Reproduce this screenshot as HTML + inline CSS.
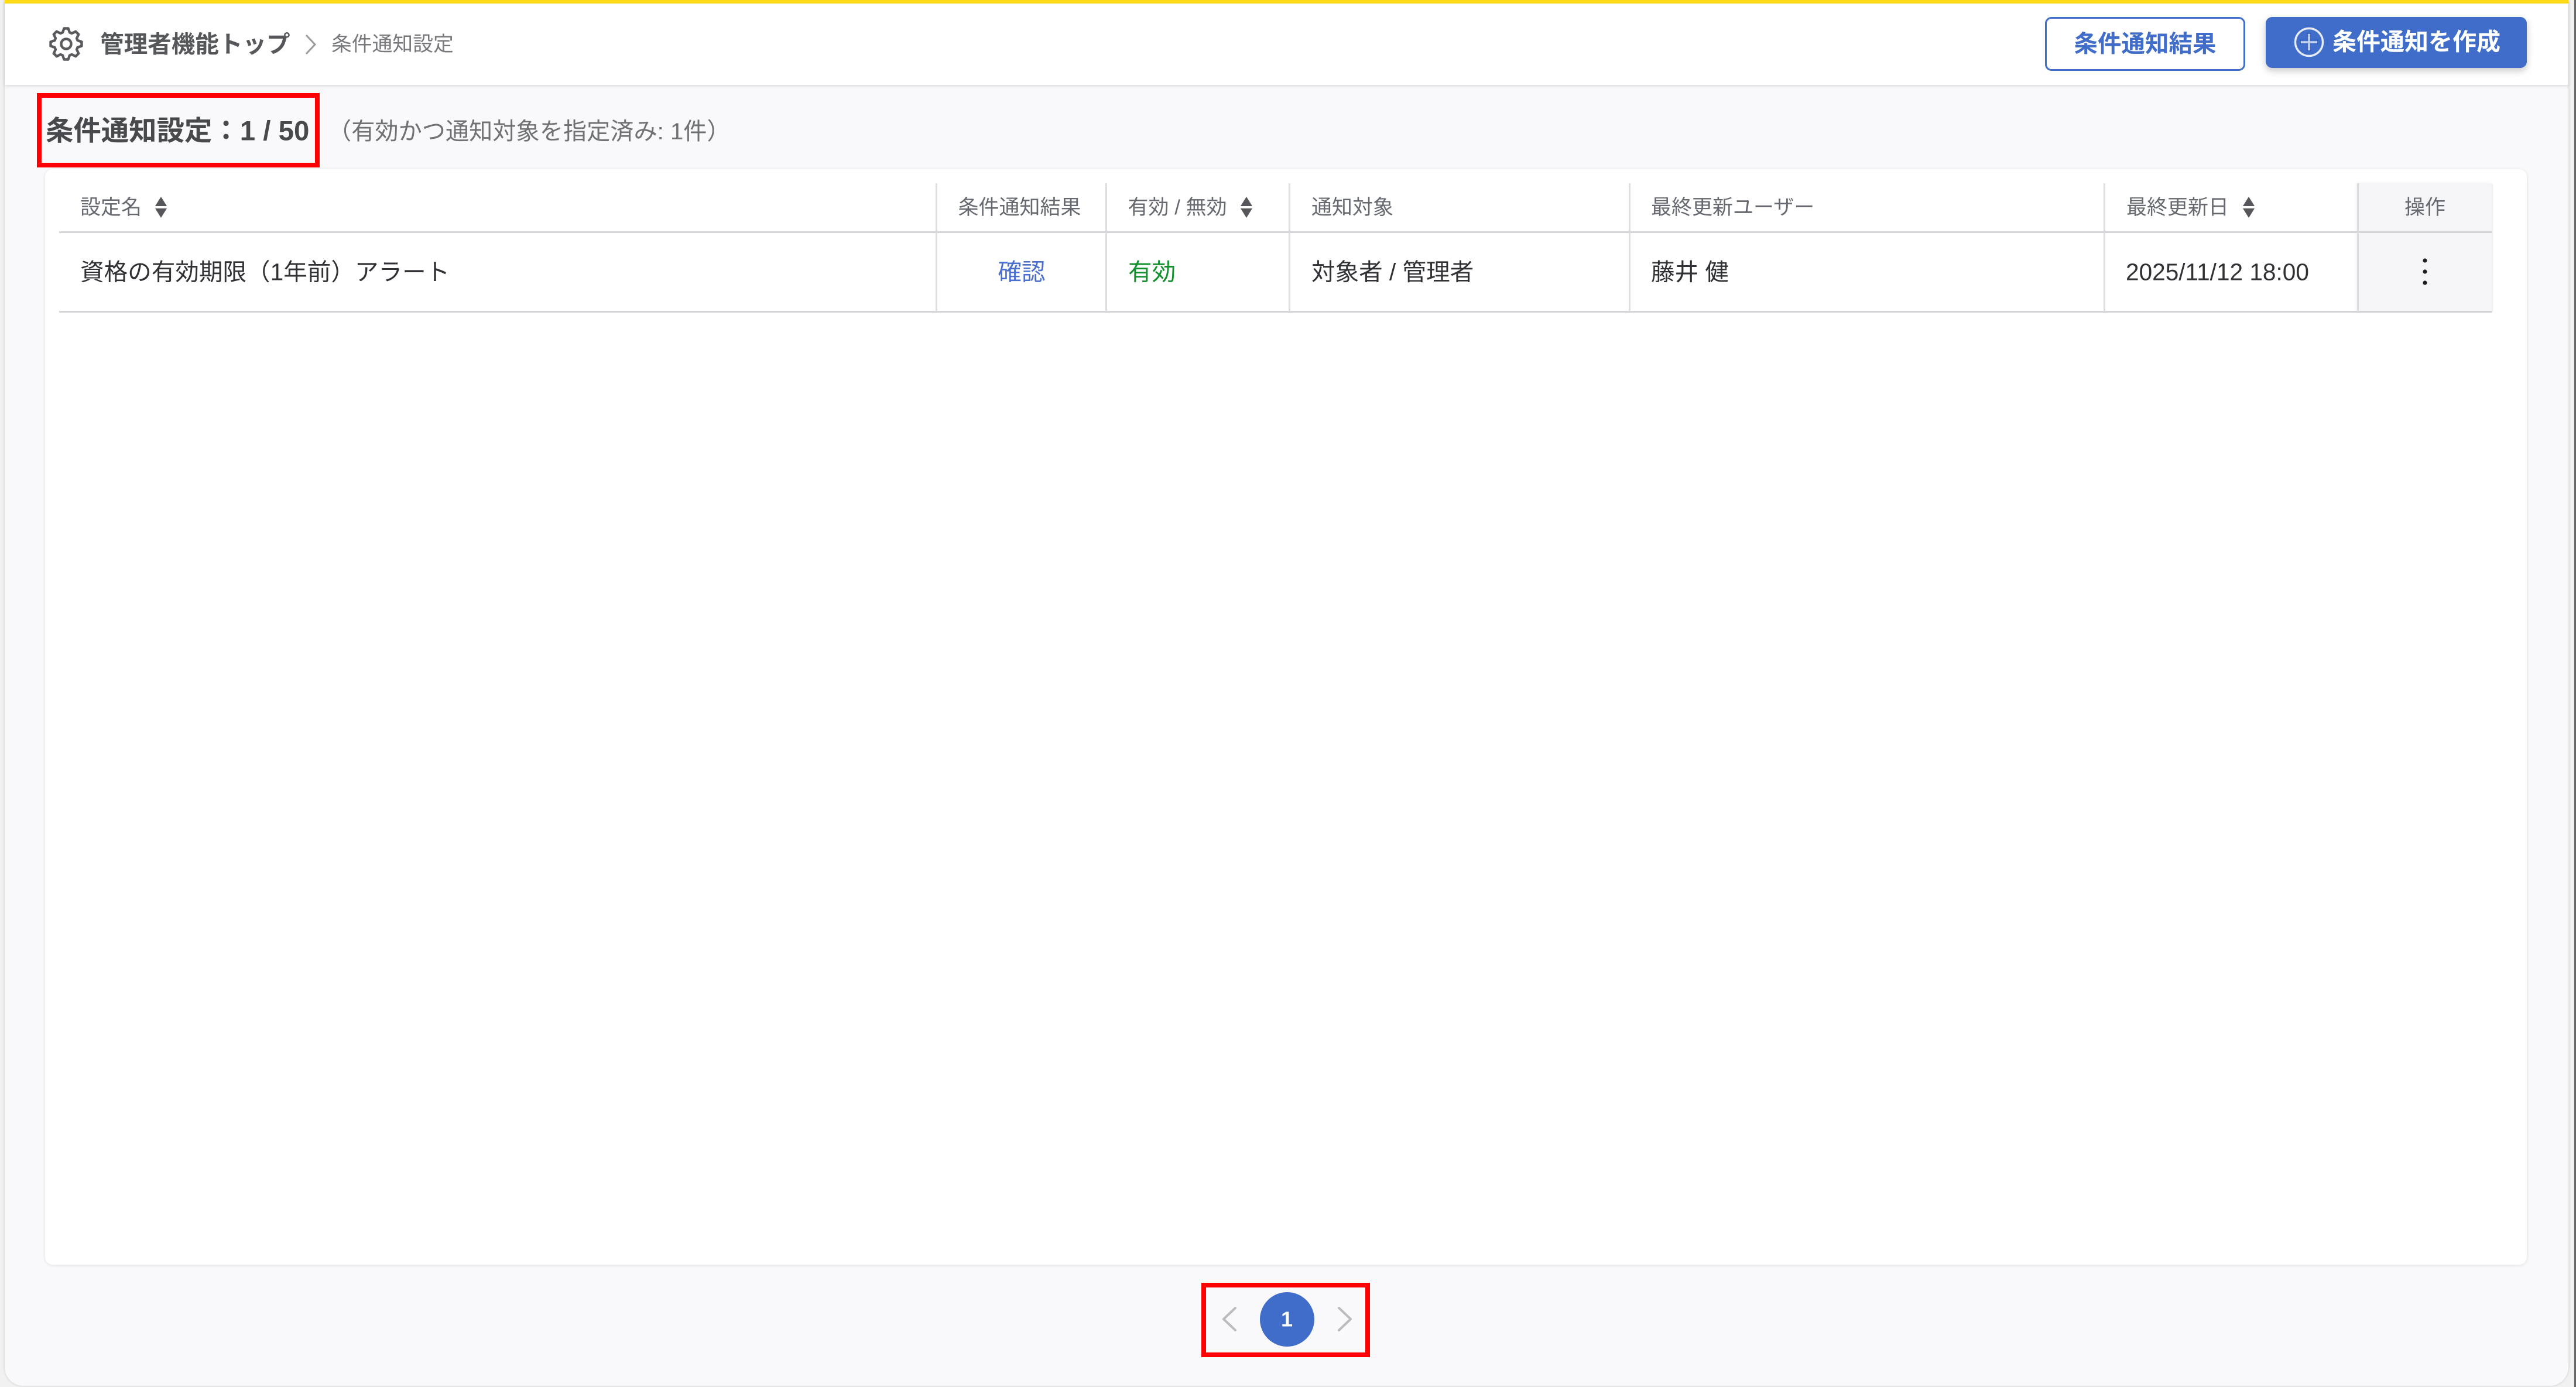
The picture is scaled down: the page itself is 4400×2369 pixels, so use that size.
<!DOCTYPE html>
<html lang="ja">
<head>
<meta charset="utf-8">
<title>条件通知設定</title>
<style>
html,body{margin:0;padding:0;width:4400px;height:2369px;overflow:hidden;background:#f1f1f1}
body{position:relative;font-family:"Liberation Sans","Noto Sans CJK JP",sans-serif}
.a{position:absolute;box-sizing:border-box}
.t{position:absolute;white-space:nowrap;transform:translateY(-50%);line-height:1.2}
.c{transform:translate(-50%,-50%)}
.h{font-size:35px;color:#666a70}
.r{font-size:40.6px;color:#2f3134}
.v{position:absolute;width:3px;background:#dcdde0}
.red{position:absolute;box-sizing:border-box;border:8px solid #f00}
</style>
</head>
<body>
<!-- outer panel -->
<div class="a" style="left:8px;top:0;width:4379px;height:2367px;background:#f9f9fb;border-radius:0 0 32px 32px;box-shadow:0 0 5px rgba(0,0,0,.16)"></div>
<div class="a" style="left:4397px;top:0;width:3px;height:2369px;background:#666"></div>

<!-- header -->
<div class="a" style="left:8px;top:0;width:4379px;height:145px;background:#fff;box-shadow:0 2px 6px rgba(0,0,0,.13)"></div>
<div class="a" style="left:8px;top:0;width:4379px;height:6px;background:#ffd814"></div>

<svg class="a" style="left:84px;top:46px" width="58" height="58" viewBox="-29 -29 58 58" fill="none" stroke="#5a5a5e" stroke-width="4.4" stroke-linejoin="round">
<path d="M-6 -19.5L-3.5 -26.5L3.5 -26.5L6 -19.5L9.55 -18.03L16.27 -21.21L21.21 -16.27L18.03 -9.55L19.5 -6L26.5 -3.5L26.5 3.5L19.5 6L18.03 9.55L21.21 16.27L16.27 21.21L9.55 18.03L6 19.5L3.5 26.5L-3.5 26.5L-6 19.5L-9.55 18.03L-16.27 21.21L-21.21 16.27L-18.03 9.55L-19.5 6L-26.5 3.5L-26.5 -3.5L-19.5 -6L-18.03 -9.55L-21.21 -16.27L-16.27 -21.21L-9.55 -18.03Z"/>
<circle cx="0" cy="0" r="8.5"/>
</svg>
<div class="t" style="left:171px;top:76px;font-size:40.6px;font-weight:700;color:#55575b">管理者機能トップ</div>
<svg class="a" style="left:518px;top:57px" width="26" height="38" viewBox="0 0 26 38" fill="none" stroke="#9a9a9e" stroke-width="3"><path d="M5 3L20 19L5 35"/></svg>
<div class="t" style="left:566px;top:76px;font-size:34.8px;color:#77797d">条件通知設定</div>

<!-- header buttons -->
<div class="a" style="left:3493px;top:29px;width:342px;height:92px;background:#fff;border:3.5px solid #3f6dc9;border-radius:11px"></div>
<div class="t c" style="left:3664px;top:75px;font-size:40.5px;font-weight:700;color:#3f6dc9">条件通知結果</div>
<div class="a" style="left:3870px;top:29px;width:446px;height:87px;background:#3f6dc9;border-radius:11px;box-shadow:0 5px 12px rgba(0,0,0,.22)"></div>
<svg class="a" style="left:3918px;top:45px" width="52" height="54" viewBox="0 0 52 54" fill="none" stroke="#e6ebf7" stroke-width="3.4"><circle cx="26" cy="27" r="23.5"/><path d="M12 27H40M26 13V41" stroke="#c9d6f0" stroke-width="3.4"/></svg>
<div class="t" style="left:3984px;top:72px;font-size:41px;font-weight:700;color:#fff">条件通知を作成</div>

<!-- title -->
<div class="t" style="left:78px;top:225px;font-size:47.4px;font-weight:700;color:#47494d">条件通知設定：1 / 50</div>
<div class="t" style="left:560px;top:225px;font-size:40.2px;color:#6f7175">（有効かつ通知対象を指定済み: 1件）</div>
<div class="red" style="left:63px;top:159px;width:483px;height:127px"></div>

<!-- card -->
<div class="a" style="left:77px;top:289px;width:4239px;height:1871px;background:#fff;border-radius:13px;box-shadow:0 1px 6px rgba(0,0,0,.11)"></div>

<!-- action column -->
<div class="a" style="left:4028px;top:313px;width:228px;height:219px;background:#f5f5f7;box-shadow:-3px 0 6px rgba(0,0,0,.07), 2px 1px 2px rgba(0,0,0,.08)"></div>

<!-- table lines -->
<div class="a" style="left:101px;top:394.5px;width:4155px;height:3.5px;background:#d3d4d8"></div>
<div class="a" style="left:101px;top:530.5px;width:4155px;height:3.5px;background:#d3d4d8"></div>
<div class="v" style="left:1598px;top:313px;height:219px"></div>
<div class="v" style="left:1888px;top:313px;height:219px"></div>
<div class="v" style="left:2201px;top:313px;height:219px"></div>
<div class="v" style="left:2782px;top:313px;height:219px"></div>
<div class="v" style="left:3593px;top:313px;height:219px"></div>
<div class="v" style="left:4026px;top:313px;height:219px"></div>

<!-- header cells -->
<div class="t h" style="left:137px;top:354.5px">設定名</div>
<svg class="a" style="left:263px;top:335px" width="24" height="38" viewBox="0 0 24 38" fill="#55575b"><path d="M12 1L22 17H2Z"/><path d="M2 21H22L12 37Z"/></svg>
<div class="t h" style="left:1636.5px;top:354.5px">条件通知結果</div>
<div class="t h" style="left:1926.5px;top:354.5px">有効 / 無効</div>
<svg class="a" style="left:2117px;top:335px" width="24" height="38" viewBox="0 0 24 38" fill="#55575b"><path d="M12 1L22 17H2Z"/><path d="M2 21H22L12 37Z"/></svg>
<div class="t h" style="left:2240px;top:354.5px">通知対象</div>
<div class="t h" style="left:2820px;top:354.5px">最終更新ユーザー</div>
<div class="t h" style="left:3632px;top:354.5px">最終更新日</div>
<svg class="a" style="left:3829px;top:335px" width="24" height="38" viewBox="0 0 24 38" fill="#55575b"><path d="M12 1L22 17H2Z"/><path d="M2 21H22L12 37Z"/></svg>
<div class="t h c" style="left:4142px;top:354.5px">操作</div>

<!-- row -->
<div class="t r" style="left:137px;top:464.5px">資格の有効期限（1年前）アラート</div>
<div class="t r c" style="left:1745px;top:464.5px;color:#4a6fcf">確認</div>
<div class="t r" style="left:1927px;top:464.5px;color:#12902e">有効</div>
<div class="t r" style="left:2240px;top:464.5px">対象者 / 管理者</div>
<div class="t r" style="left:2820px;top:464.5px">藤井 健</div>
<div class="t r" style="left:3631px;top:464.5px">2025/11/12 18:00</div>
<svg class="a" style="left:4132px;top:438px" width="20" height="52" viewBox="0 0 20 52" fill="#1d1d1f"><circle cx="10" cy="7" r="3.6"/><circle cx="10" cy="26" r="3.6"/><circle cx="10" cy="45" r="3.6"/></svg>

<!-- pagination -->
<div class="red" style="left:2052px;top:2191px;width:288px;height:127px"></div>
<svg class="a" style="left:2080px;top:2225px" width="240" height="56" viewBox="2080 2225 240 56" fill="none" stroke="#bcbcbf" stroke-width="4" stroke-linecap="round" stroke-linejoin="round"><path d="M2110 2234L2090 2253L2110 2272"/><path d="M2287 2234L2307 2253L2287 2272"/></svg>
<div class="a" style="left:2152px;top:2207px;width:93px;height:93px;border-radius:50%;background:#3f6dc9"></div>
<div class="t c" style="left:2198px;top:2253px;font-size:36px;font-weight:700;color:#fff">1</div>
</body>
</html>
